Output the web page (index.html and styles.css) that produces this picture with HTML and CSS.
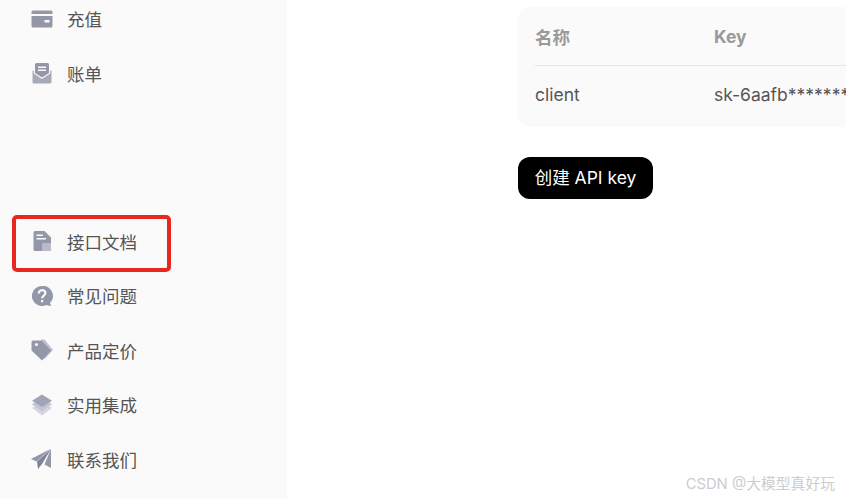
FILE: index.html
```html
<!DOCTYPE html>
<html lang="zh-CN">
<head>
    <meta charset="UTF-8">
    <meta name="viewport" content="width=device-width, initial-scale=1.0">
    <title>API keys</title>
    <link rel="stylesheet" href="styles.css">
</head>
<body>

<div class="page">
    <!-- Sidebar -->
    <aside class="sidebar">
        <nav class="nav nav-top">
            <a class="nav-item">
                <svg class="icon" viewBox="0 0 22 18"><path fill="#9397a8" d="M2 .5h18a1.500 1.500 0 0 1 1.500 1.500v2H.5V2A1.500 1.500 0 0 1 2 .5z"/><path fill="#9397a8" fill-rule="evenodd" d="M.5 6h21v10a1.500 1.500 0 0 1-1.500 1.500H2A1.500 1.500 0 0 1 .5 16zm13 4v2.500h5V10z"/></svg>
                <span>充值</span>
            </a>
            <a class="nav-item">
                <svg class="icon" viewBox="0 0 22 22"><path fill="#9397a8" fill-rule="evenodd" d="M5.500 1h11A1.500 1.500 0 0 1 18 2.500V11l-7 4.500L4 11V2.500A1.500 1.500 0 0 1 5.500 1zM7 4.500V6h8V4.500zM7 7.500V9h8V7.500z"/><path fill="#a6a9b8" d="M1.500 9l1.300-.8v3.400L11 17l8.200-5.400V8.200l1.300.8v11a1.500 1.500 0 0 1-1.500 1.500H3A1.500 1.500 0 0 1 1.500 20z"/></svg>
                <span>账单</span>
            </a>
        </nav>
        <nav class="nav">
            <a class="nav-item">
                <svg class="icon" viewBox="0 0 22 22"><path fill="#9397a8" fill-rule="evenodd" d="M4 1h9.500L20 7.500V19.500A1.500 1.500 0 0 1 18.500 21H4a1.500 1.500 0 0 1-1.500-1.500v-17A1.500 1.500 0 0 1 4 1zM5.500 4.500V6H12V4.500zM5.500 8v1.500H15V8z"/><path fill="#b7bac7" d="M11 14a1 1 0 0 1 1-1h8v6.500a1.500 1.500 0 0 1-1.500 1.500H11z"/></svg>
                <span>接口文档</span>
            </a>
            <a class="nav-item">
                <svg class="icon" viewBox="0 0 22 22"><path fill="#9397a8" d="M11 1a10 10 0 1 0 4.500 18.900l3.500 1.100 1-.5-1-2.500A10 10 0 0 0 11 1z"/><path fill="none" stroke="#fafafa" stroke-width="2.200" d="M7.800 8.500c0-4.300 6.600-4.300 6.600-.4 0 2.500-3.300 2.500-3.300 5.200"/><rect fill="#fafafa" x="10" y="15" width="2.200" height="2.300"/></svg>
                <span>常见问题</span>
            </a>
            <a class="nav-item">
                <svg class="icon" viewBox="0 0 22 22"><path fill="#bcbfcb" d="M10 .5h3.500L22 11l-8.500 9z"/><path fill="#9397a8" fill-rule="evenodd" d="M2 1.500h8.500L20 11.500 11 21.500.5 11.500V3A1.500 1.500 0 0 1 2 1.500zm3.500 2.500a1.500 1.500 0 1 0 0 3 1.500 1.500 0 0 0 0-3z"/></svg>
                <span>产品定价</span>
            </a>
            <a class="nav-item">
                <svg class="icon" viewBox="0 0 22 22"><path fill="#d5d7e0" d="M4 12l7 3.500 7-3.500 3 2-10 7.500L1 14z"/><path fill="#c3c6d2" d="M4 8l7 3.500L18 8l3 2.200L11 17.500 1 10.200z"/><path fill="#a0a4b4" d="M11 .5l10 6.200-10 6.300-10-6.300z"/></svg>
                <span>实用集成</span>
            </a>
            <a class="nav-item">
                <svg class="icon" viewBox="0 0 22 22"><path fill="#9397a8" d="M20 1v19l-6.500-3.500z"/><path fill="#9397a8" d="M19.500 1L0 11l5.500 2.500z"/><path fill="#7f8395" d="M20 1L6 13.500 7 21l4-5z"/></svg>
                <span>联系我们</span>
            </a>
        </nav>
    </aside>

    <!-- API keys -->
    <main class="content">
        <div class="key-table">
            <div class="key-row key-head">
                <div class="col-name">名称</div>
                <div>Key</div>
            </div>
            <div class="key-row key-body">
                <div class="col-name">client</div>
                <div>sk-6aafb****************</div>
            </div>
        </div>
        <button class="create-btn">创建 API key</button>
    </main>
</div>

<!-- Annotation and watermark sit over the page -->
<div class="highlight"></div>
<div class="watermark">CSDN @大模型真好玩</div>

</body>
</html>
```

FILE: styles.css
```css
html, body {
    margin: 0;
    height: 100%;
    overflow: hidden;
}
body {
    position: relative;
    background-color: white;
    color: #555;
    font-family: Inter, "Noto Sans CJK SC", sans-serif;
    font-size: 17.5px;
}
.page {
    display: flex;
    height: 499px;
}
.sidebar {
    width: 287px;
    flex-shrink: 0;
    background-color: #fafafa;
    box-sizing: border-box;
    padding-left: 31px;
}
.nav {
    display: flex;
    flex-direction: column;
}
.nav-top {
    margin-top: -8.5px;
    margin-bottom: 113.5px;
}
.nav-item {
    display: flex;
    align-items: center;
    gap: 14px;
    height: 54.5px;
}
.icon {
    width: 22px;
    height: 22px;
    flex-shrink: 0;
}
.content {
    flex: 1;
    min-width: 0;
    padding: 7px 0 0 231px;
}
.key-table {
    width: 600px;
    height: 120px;
    box-sizing: border-box;
    padding: 0 17px;
    background-color: #fafafa;
    border-radius: 12px;
}
.key-row {
    display: flex;
    align-items: center;
    height: 58px;
    white-space: nowrap;
}
.key-head {
    color: #999;
    font-weight: 700;
    border-bottom: 1px solid #e5e5e5;
}
.key-body {
    padding-bottom: 2px;
    box-sizing: border-box;
}
.col-name {
    width: 179px;
}
.create-btn {
    display: block;
    width: 135px;
    height: 42px;
    margin-top: 30px;
    padding: 0 0 3px;
    background-color: black;
    color: white;
    border: none;
    border-radius: 12px;
    font-family: inherit;
    font-size: 17.5px;
}
.highlight {
    position: absolute;
    left: 12px;
    top: 215px;
    width: 159px;
    height: 57px;
    box-sizing: border-box;
    border: 4px solid #e8281e;
    border-radius: 5px;
}
.watermark {
    position: absolute;
    right: 11px;
    top: 475px;
    color: #cdcdcd;
    font-size: 14.8px;
    line-height: 18px;
}
```
